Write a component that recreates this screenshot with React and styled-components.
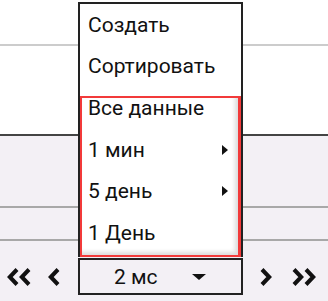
import styled, { createGlobalStyle } from "styled-components";

const GlobalStyle = createGlobalStyle`
  html, body {
    margin: 0;
    padding: 0;
    background: #fff;
  }
  body {
    font-family: Roboto, "Noto Sans", sans-serif;
    color: #111;
  }
`;

const Page = styled.div`
  width: 328px;
  height: 301px;
  display: flex;
  flex-direction: column;
  overflow: hidden;
`;

const Header = styled.div`
  background: #fff;
  height: 134px;
  display: flex;
  flex-direction: column;
`;

const HeaderRow = styled.div`
  height: 44px;
`;

const Rule = styled.div`
  height: 2px;
  flex-shrink: 0;
  background: ${(p) => p.color || "#aaa"};
`;

const Body = styled.div`
  flex: 1;
  background: #f3f0f5;
  display: flex;
  flex-direction: column;
`;

const ListRow = styled.div`
  height: ${(p) => p.h}px;
  flex-shrink: 0;
`;

const Pager = styled.div`
  display: flex;
  align-items: center;
  padding: 17px 0 0 7px;
`;

const Chevron = styled.svg`
  display: block;
  flex-shrink: 0;
  margin-left: ${(p) => p.gap || 0}px;
`;

const SelectWrap = styled.div`
  position: relative;
  margin-left: 18px;
`;

const SelectBox = styled.div`
  width: 165px;
  height: 37px;
  box-sizing: border-box;
  border: 2px solid #222;
  display: flex;
  align-items: center;
  padding: 0 35px 0 34px;
  font-size: 21px;
`;

const Caret = styled.span`
  margin-left: auto;
  width: 0;
  height: 0;
  border-left: 7px solid transparent;
  border-right: 7px solid transparent;
  border-top: 6px solid #111;
`;

const Menu = styled.div`
  position: absolute;
  left: 0;
  bottom: calc(100% + 1px);
  width: 165px;
  height: 255px;
  box-sizing: border-box;
  background: #fff;
  border: 2px solid #222;
  border-bottom: none;
`;

const Item = styled.div`
  height: 41.6px;
  display: flex;
  align-items: center;
  padding: 0 13px 0 8px;
  font-size: 21px;
  white-space: nowrap;
`;

const SubArrow = styled.span`
  margin-left: auto;
  width: 0;
  height: 0;
  border-top: 5px solid transparent;
  border-bottom: 5px solid transparent;
  border-left: 6px solid #111;
`;

const Highlight = styled.div`
  position: absolute;
  left: 0;
  right: 0;
  top: 92px;
  bottom: 0;
  border: 2px solid #f23a3a;
  border-right-width: 3px;
  box-shadow: inset -3px -3px 4px rgba(0, 0, 0, 0.14);
  pointer-events: none;
`;

const Left = ({ gap }) => (
  <Chevron width="12" height="18" viewBox="0 0 12 18" gap={gap}>
    <polyline points="10,1.5 2.8,9 10,16.5" fill="none" stroke="#111" strokeWidth="4" />
  </Chevron>
);

const Right = ({ gap }) => (
  <Chevron width="12" height="18" viewBox="0 0 12 18" gap={gap}>
    <polyline points="2,1.5 9.2,9 2,16.5" fill="none" stroke="#111" strokeWidth="4" />
  </Chevron>
);

const DoubleLeft = ({ gap }) => (
  <Chevron width="25" height="18" viewBox="0 0 25 18" gap={gap}>
    <polyline points="10,1.5 2.8,9 10,16.5" fill="none" stroke="#111" strokeWidth="4" />
    <polyline points="22,1.5 14.8,9 22,16.5" fill="none" stroke="#111" strokeWidth="4" />
  </Chevron>
);

const DoubleRight = ({ gap }) => (
  <Chevron width="25" height="18" viewBox="0 0 25 18" gap={gap}>
    <polyline points="3,1.5 10.2,9 3,16.5" fill="none" stroke="#111" strokeWidth="4" />
    <polyline points="15,1.5 22.2,9 15,16.5" fill="none" stroke="#111" strokeWidth="4" />
  </Chevron>
);

const menuItems = [
  { label: "Создать" },
  { label: "Сортировать" },
  { label: "Все данные" },
  { label: "1 мин", sub: true },
  { label: "5 день", sub: true },
  { label: "1 День" },
];

export default function App() {
  return (
    <>
      <GlobalStyle />
      <Page>
        <Header>
          <HeaderRow />
          <Rule color="#cccccc" />
        </Header>
        <Rule color="#444" />
        <Body>
          <ListRow h={70} />
          <Rule color="#a8a8a8" />
          <ListRow h={31} />
          <Rule color="#a8a8a8" />
          <Pager>
            <DoubleLeft />
            <Left gap={16} />
            <SelectWrap>
              <SelectBox>
                2 мс
                <Caret />
              </SelectBox>
              <Menu>
                {menuItems.map((it) => (
                  <Item key={it.label}>
                    {it.label}
                    {it.sub && <SubArrow />}
                  </Item>
                ))}
                <Highlight />
              </Menu>
            </SelectWrap>
            <Right gap={17} />
            <DoubleRight gap={19} />
          </Pager>
        </Body>
      </Page>
    </>
  );
}
